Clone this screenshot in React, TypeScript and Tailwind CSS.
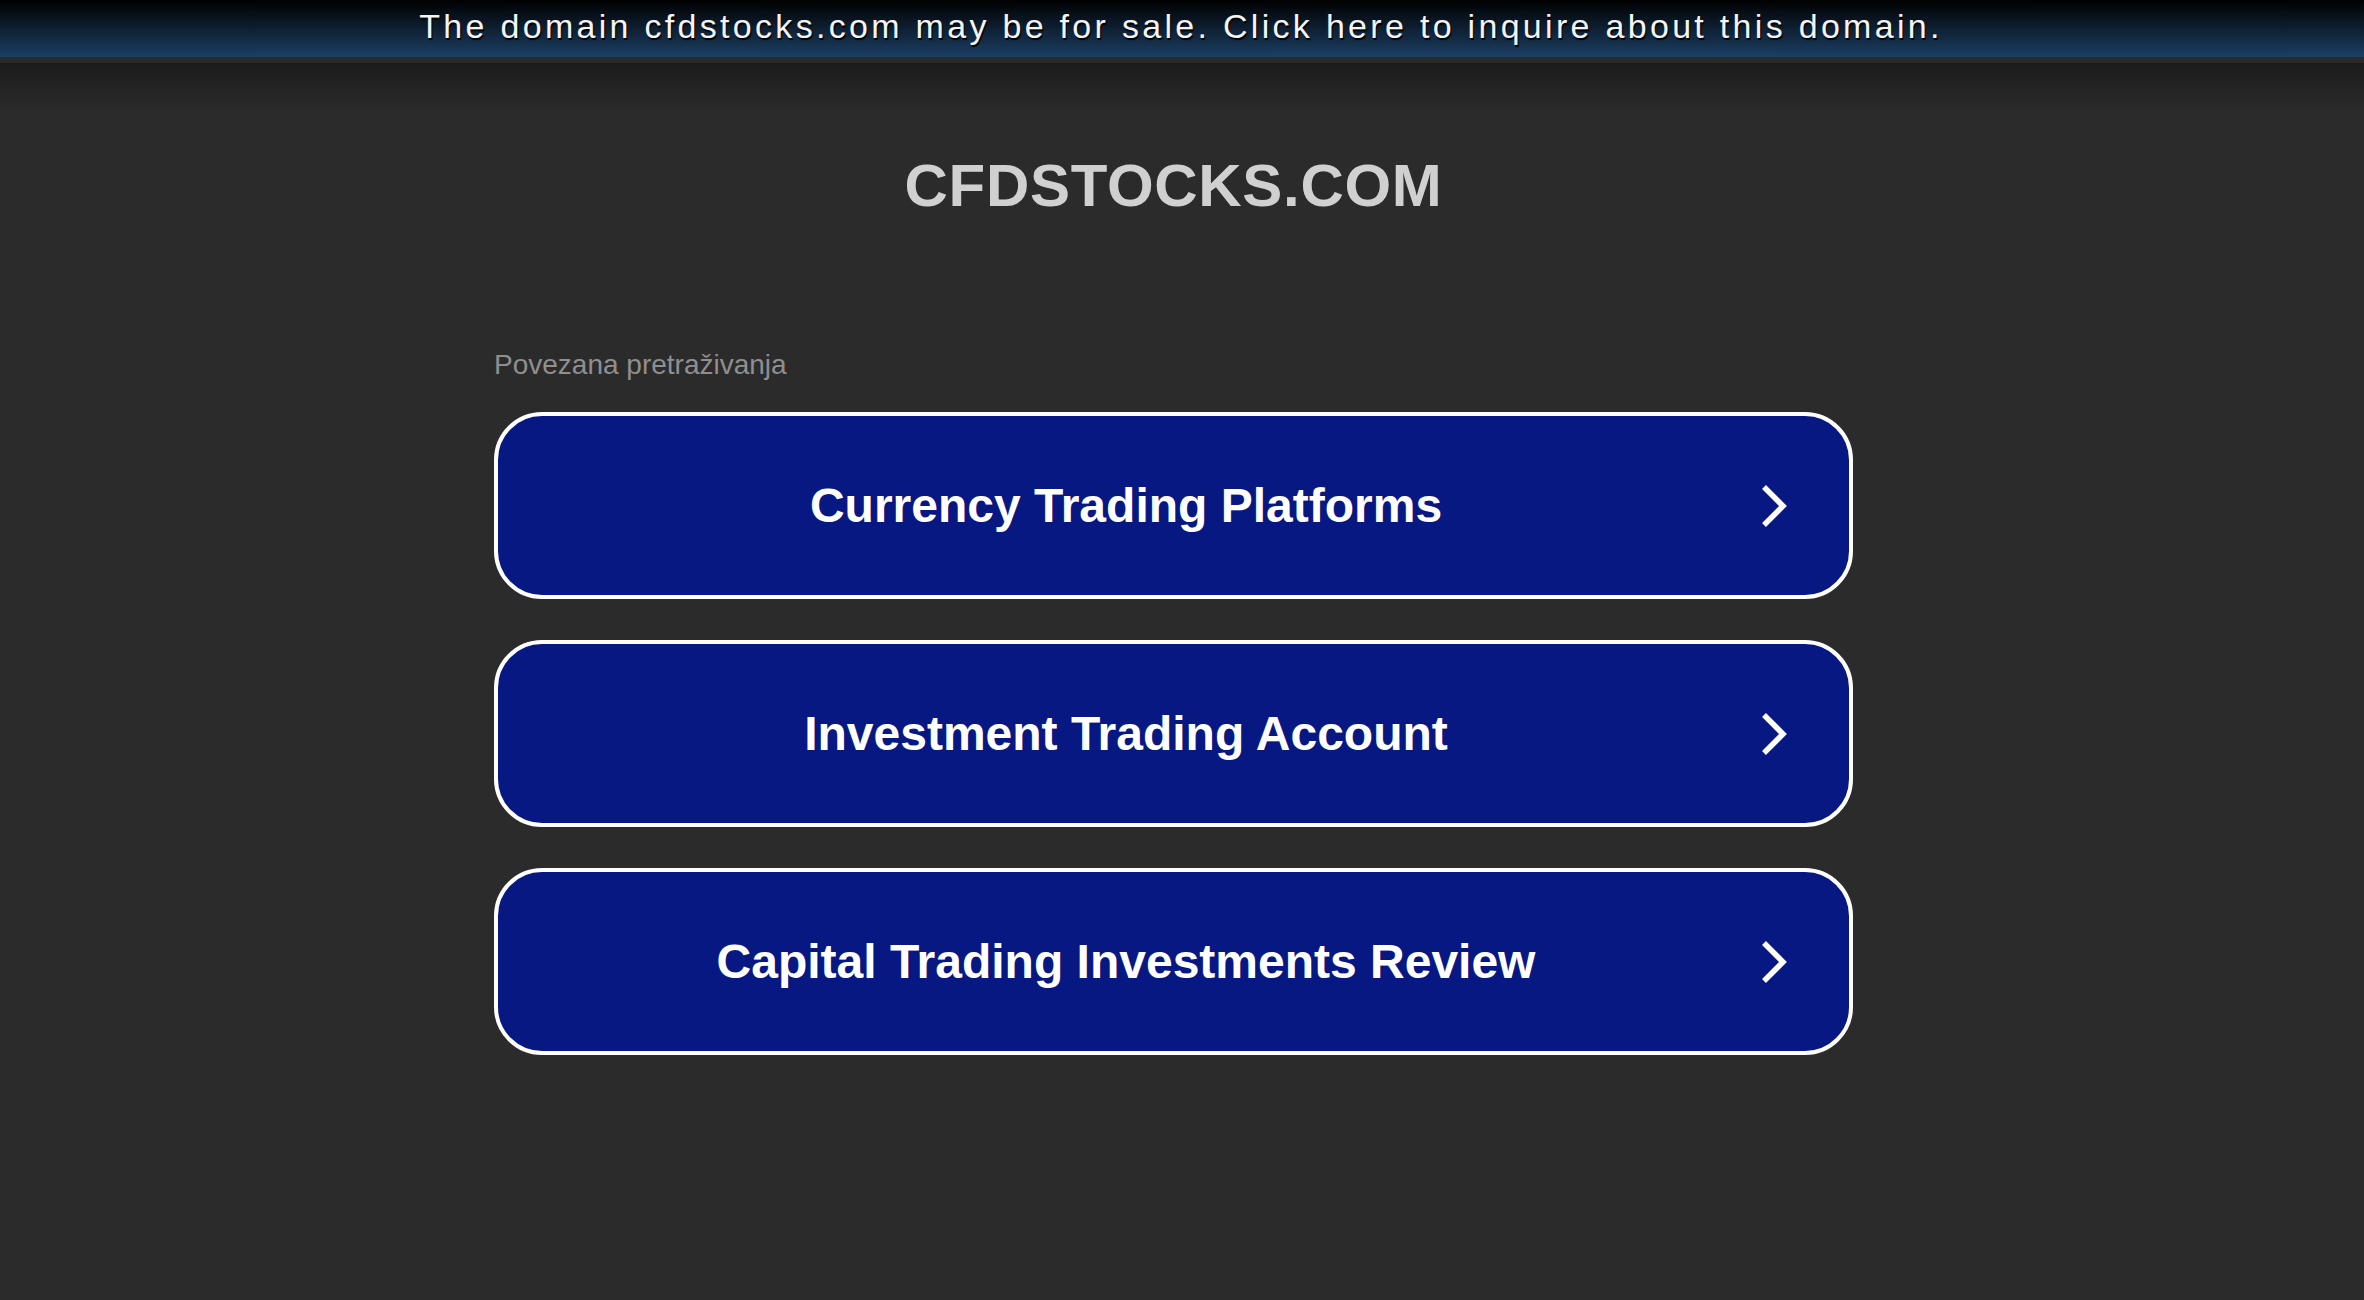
import React from "react";

const items = [
  "Currency Trading Platforms",
  "Investment Trading Account",
  "Capital Trading Investments Review",
];

function Chevron() {
  return (
    <svg width="30" height="46" viewBox="0 0 30 46" className="block">
      <polyline
        points="5,4 24,23 5,42"
        fill="none"
        stroke="#ffffff"
        strokeWidth="5.5"
        strokeLinejoin="miter"
        strokeLinecap="butt"
      />
    </svg>
  );
}

export default function App() {
  return (
    <div className="min-h-screen w-full bg-[#2b2b2b] font-['Liberation_Sans',Arial,sans-serif]">
      <div className="h-[57px] w-full bg-[linear-gradient(to_bottom,#000000,#1c3f64)] flex items-center justify-center pb-[5px] pr-[2px]">
        <p className="text-[34px] leading-none tracking-[3.3px] text-[#f4f4f4] [text-shadow:1px_2px_1px_#000000] whitespace-nowrap">
          The domain cfdstocks.com may be for sale. Click here to inquire about this domain.
        </p>
      </div>
      <div className="h-[6px] w-full bg-[#2a2a2a]" />
      <div className="w-full bg-[linear-gradient(to_bottom,#1b1b1b_0px,#2b2b2b_48px)]">
        <div className="w-[2347px] pb-[240px]">
          <div className="mx-auto w-[1359px] flex flex-col">
            <h1 className="mt-[93px] text-center text-[60px] leading-[60px] font-bold text-[#d0d0d0] tracking-[0.7px]">
              CFDSTOCKS.COM
            </h1>
            <p className="mt-[135px] text-[28px] leading-[28px] text-[#8f8f8f]">
              Povezana pretraživanja
            </p>
            <div className="mt-[33px] flex flex-col gap-[41px]">
              {items.map((t) => (
                <div
                  key={t}
                  className="h-[187px] w-full rounded-[48px] border-[4px] border-white bg-[#081882] flex items-center"
                >
                  <div className="flex-1 text-center text-[48px] font-bold text-white leading-none">
                    {t}
                  </div>
                  <div className="w-[95px] flex items-center justify-start pl-[5px]">
                    <Chevron />
                  </div>
                </div>
              ))}
            </div>
          </div>
        </div>
      </div>
    </div>
  );
}
